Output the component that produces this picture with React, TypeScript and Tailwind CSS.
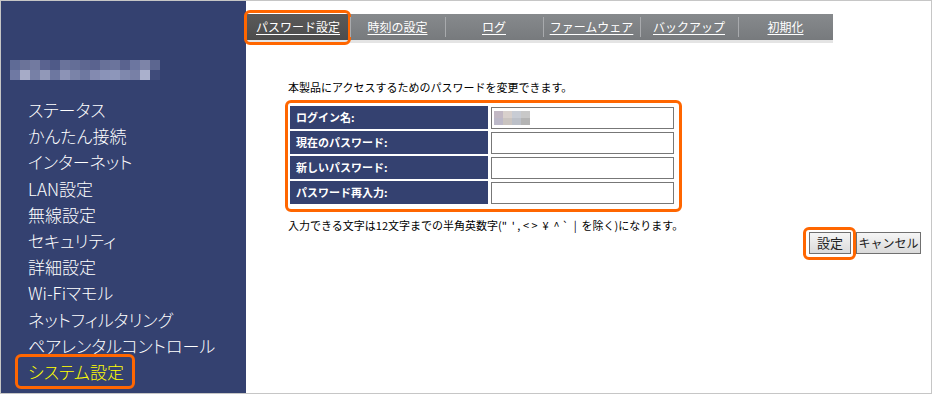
const menu = [
  "ステータス",
  "かんたん接続",
  "インターネット",
  "LAN設定",
  "無線設定",
  "セキュリティ",
  "詳細設定",
  "Wi-Fiマモル",
  "ネットフィルタリング",
  "ペアレンタルコントロール",
  "システム設定",
]

const tabs = [
  { label: "パスワード設定", w: "w-[104px]", active: true },
  { label: "時刻の設定", w: "w-[95px]" },
  { label: "ログ", w: "w-[98px]" },
  { label: "ファームウェア", w: "w-[97px]" },
  { label: "バックアップ", w: "w-[98px]" },
  { label: "初期化", w: "w-[95px]" },
]

const rows = ["ログイン名:", "現在のパスワード:", "新しいパスワード:", "パスワード再入力:"]

// mosaic standing in for the blurred product logo
const logoTop = ["#5f6b96", "#6b7399", "#727aa0", "#5a6390", "#4f5a88", "#6a739b", "#646e97", "#5e6791", "#5a638f", "#687199", "#6b749c", "#5a638f", "#6c76a0", "#7d84a8", "#5c6690"]
const logoBottom = ["#6f79a3", "#a6abc7", "#7780a6", "#9198b8", "#6d77a0", "#8c93b6", "#7a83a8", "#6e78a0", "#838ab0", "#8a93b8", "#8d96ba", "#7f88ad", "#7880a6", "#aab0cc", "#3f4b7a"]
const loginTop = ["#c2b8c4", "#d8d0cc", "#c8ccd4", "#c8c8c8"]
const loginBottom = ["#bcb8c8", "#cac4c0", "#bcc0c8", "#b4b4b4"]

export default function App() {
  return (
    <div className="flex h-[394px] w-[932px] border border-[#c6c6c6] bg-white font-['Noto_Sans_CJK_JP',sans-serif]">
      {/* Sidebar */}
      <div className="flex w-[245px] shrink-0 flex-col bg-[#344170]">
        <div className="ml-[9px] mt-[59px] flex flex-col">
          <div className="flex">
            {logoTop.map((c, i) => (
              <div key={i} className="h-[10px] w-[10px]" style={{ backgroundColor: c }} />
            ))}
          </div>
          <div className="flex">
            {logoBottom.map((c, i) => (
              <div key={i} className="h-[10px] w-[10px]" style={{ backgroundColor: c }} />
            ))}
          </div>
        </div>
        <ul className="ml-[27px] mt-[17px] flex flex-col font-light [font-feature-settings:'palt']">
          {menu.map((m, i) => {
            const active = i === menu.length - 1
            return (
              <li key={m} className="h-[26.2px] whitespace-nowrap text-[17px] leading-[26.2px]">
                <span className={active ? "relative text-[#ffff00]" : "relative text-white"}>
                  {m}
                  {active && (
                    <span className="absolute -bottom-[5px] -left-[13px] -right-[11px] -top-[5px] rounded-[6px] border-[3px] border-[#ff6600]" />
                  )}
                </span>
              </li>
            )
          })}
        </ul>
      </div>

      {/* Main */}
      <div className="flex flex-1 flex-col">
        <div className="mt-[13px] flex w-[587px] flex-col">
          <div className="flex h-[26px] bg-gradient-to-b from-[#878a8d] to-[#777a7d]">
            {tabs.map((t, i) => (
              <div
                key={t.label}
                className={`relative flex items-center justify-center ${t.w} ${t.active ? "bg-gradient-to-b from-[#5a5a5a] to-[#4c4c4c]" : ""}`}
              >
                {i > 0 && <span className="absolute left-0 top-[3px] h-[20px] w-px bg-[#a8aaad]" />}
                <span className="text-[12px] leading-none text-white underline underline-offset-2">{t.label}</span>
                {t.active && (
                  <span className="absolute -bottom-[5px] -left-[2px] -right-[1px] -top-[4px] rounded-[6px] border-[3px] border-[#ff6600]" />
                )}
              </div>
            ))}
          </div>
          <div className="h-[3px] bg-[#e4e4e4]" />
        </div>

        <div className="flex flex-col pl-[39px] pr-[10px]">
          <p className="ml-[3px] mt-[36px] text-[11px] leading-[16px] text-black">
            本製品にアクセスするためのパスワードを変更できます。
          </p>

          <div className="mt-[5px] flex w-[397px] flex-col gap-[2px] rounded-[6px] border-[3px] border-[#ff6600] pb-[5px] pl-[2px] pt-[3px]">
            {rows.map((r, i) => (
              <div key={r} className="flex h-[23px] items-center gap-[3px]">
                <div className="flex h-full w-[198px] items-center bg-[#344170] pl-[6px] text-[11px] font-bold text-white">
                  {r}
                </div>
                <div className="flex h-[22px] w-[183px] items-center border border-[#777] bg-white pl-[2px]">
                  {i === 0 && (
                    <div className="flex flex-col">
                      <div className="flex">
                        {loginTop.map((c, j) => (
                          <div key={j} className="h-[7px] w-[9px]" style={{ backgroundColor: c }} />
                        ))}
                      </div>
                      <div className="flex">
                        {loginBottom.map((c, j) => (
                          <div key={j} className="h-[7px] w-[9px]" style={{ backgroundColor: c }} />
                        ))}
                      </div>
                    </div>
                  )}
                </div>
              </div>
            ))}
          </div>

          <p className="ml-[3px] mt-[6px] whitespace-pre text-[11px] leading-[14px] text-black">
            入力できる文字は12文字までの半角英数字(&quot;  &#39; , &lt; &gt;  ¥  ^ `  |  を除く)になります。
          </p>

          <div className="flex justify-end gap-[5px]">
            <button className="relative h-[22px] w-[42px] border border-[#707070] bg-gradient-to-b from-[#f6f6f6] to-[#dadada] p-0 text-[13px] text-[#222]">
              設定
              <span className="absolute -bottom-[7px] -left-[7px] -right-[6px] -top-[6px] rounded-[6px] border-[3px] border-[#ff6600]" />
            </button>
            <button className="h-[22px] w-[65px] whitespace-nowrap border border-[#707070] bg-gradient-to-b from-[#f6f6f6] to-[#dadada] p-0 text-[12px] text-[#222]">
              キャンセル
            </button>
          </div>
        </div>
      </div>
    </div>
  )
}
